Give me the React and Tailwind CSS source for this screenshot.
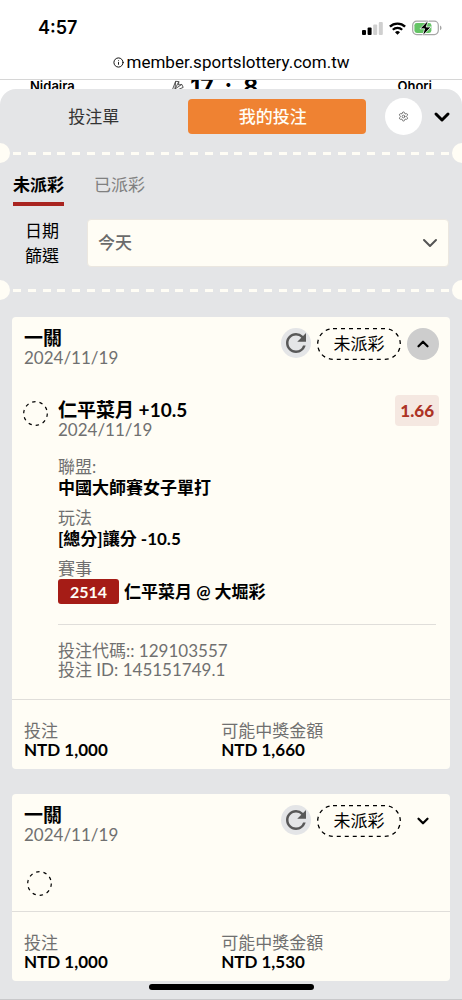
import { useState } from 'react';
import { ChevronDown, ChevronUp, Info, Settings } from 'lucide-react';
import { MdRefresh } from 'react-icons/md';

const BETS = [
    {
        id: 'bet-1',
        title: '一關',
        date: '2024/11/19',
        status: '未派彩',
        open: true,
        stake: 'NTD 1,000',
        payout: 'NTD 1,660',
        pick: {
            name: '仁平菜月 +10.5',
            date: '2024/11/19',
            odds: '1.66',
            league: '中國大師賽女子單打',
            market: '[總分]讓分 -10.5',
            eventNo: '2514',
            event: '仁平菜月 @ 大堀彩',
            code: '129103557',
            betId: '145151749.1'
        }
    },
    {
        id: 'bet-2',
        title: '一關',
        date: '2024/11/19',
        status: '未派彩',
        open: false,
        stake: 'NTD 1,000',
        payout: 'NTD 1,530'
    }
];

const StatusBar = () => (
    <div className="flex items-center justify-between pl-[38px] pr-[20px] pt-4 font-['Inter',sans-serif]">
        <span className="text-[18px] leading-6 font-semibold">4:57</span>
        <div className="flex items-center gap-[6px]">
            <svg width="21" height="14" viewBox="0 0 21 14" aria-hidden="true">
                <rect x="0" y="9" width="4" height="5" rx="1" fill="#000" />
                <rect x="5.6" y="6.5" width="4" height="7.5" rx="1" fill="#000" />
                <rect x="11.2" y="3.5" width="4" height="10.5" rx="1" fill="#cfcfcf" />
                <rect x="16.8" y="1" width="4" height="13" rx="1" fill="#cfcfcf" />
            </svg>
            <svg width="17" height="13" viewBox="0 0 17 13" fill="none" stroke="#000" aria-hidden="true">
                <path d="M.9 4.7a10.9 10.9 0 0 1 15.2 0" strokeWidth="2.4" />
                <path d="M3.8 7.8a6.7 6.7 0 0 1 9.4 0" strokeWidth="2.2" />
                <path d="M8.5 12.8 6 10.2a3.6 3.6 0 0 1 5 0z" fill="#000" stroke="none" />
            </svg>
            <svg width="30" height="16" viewBox="0 0 30 16" aria-hidden="true">
                <rect x=".7" y="1.2" width="25.6" height="13.4" rx="4" fill="#fff" stroke="#a6a6a6" strokeWidth="1.2" />
                <path d="M28 5.6q1.6.8 1.6 2.3T28 10.2z" fill="#a6a6a6" />
                <rect x="2.4" y="2.9" width="17" height="10" rx="2.4" fill="#65c466" />
                <path d="M16.5 0 8 8.8h4.6L10.4 16 19 7h-4.8z" fill="#000" stroke="#fff" strokeWidth=".8" />
            </svg>
        </div>
    </div>
);

// Ticket style separator: half circles on the sides, dashes between
const Perforation = () => (
    <div className="flex h-5 items-center justify-between">
        <span className="h-5 w-[10px] rounded-r-full bg-[#fffdf5]" />
        <div className="mx-[3px] flex flex-1 justify-between">
            {Array.from({ length: 30 }, (_, i) => (
                <span key={i} className="h-[3px] w-2 bg-[#fffdf5]" />
            ))}
        </div>
        <span className="h-5 w-[10px] rounded-l-full bg-[#fffdf5]" />
    </div>
);

const PendingCircle = () => (
    <svg className="shrink-0" width="25" height="25" viewBox="0 0 25 25" fill="none" aria-hidden="true">
        <circle cx="12.5" cy="12.5" r="11.8" stroke="#000" strokeWidth="1.2" strokeDasharray="3.4 4.01" />
    </svg>
);

const StatusPill = ({ children }) => (
    <span className="relative flex h-8 w-[84px] items-center justify-center text-[17px]">
        <svg className="absolute inset-0" width="84" height="32" viewBox="0 0 84 32" fill="none" aria-hidden="true">
            <rect x=".7" y=".7" width="82.6" height="30.6" rx="15.3" stroke="#000" strokeWidth="1.3" strokeDasharray="4 4" />
        </svg>
        {children}
    </span>
);

const Detail = ({ label, children }) => (
    <div className="mt-[9px] leading-[21px]">
        <dt className="text-[#707070]">{label}</dt>
        <dd className="font-bold">{children}</dd>
    </div>
);

const PickDetails = ({ pick }) => (
    <div className="mt-[27px] flex pr-[11px] pl-[11px]">
        <div className="pt-[6px] pr-[10px]">
            <PendingCircle />
        </div>
        <div className="flex-1">
            <div className="flex items-start justify-between">
                <div className="pt-[5px] leading-5">
                    <h3 className="text-[19px] leading-5 font-bold">{pick.name}</h3>
                    <p className="text-[#707070]">{pick.date}</p>
                </div>
                <span className="rounded bg-[#f5e8e1] px-[5px] leading-[31px] font-black text-[#ad3426]">{pick.odds}</span>
            </div>
            <dl className="pt-[7px]">
                <Detail label="聯盟:">{pick.league}</Detail>
                <Detail label="玩法">{pick.market}</Detail>
                <Detail label="賽事">
                    <span className="flex items-center gap-[5px] leading-[25px]">
                        <span className="w-[61px] rounded-[3px] bg-[#a51c16] text-center text-[16px] text-[#fffdf5]">{pick.eventNo}</span>
                        {pick.event}
                    </span>
                </Detail>
            </dl>
            <div className="mt-5 mr-[3px] border-t border-[#e0deda] pt-4 pb-5 leading-[19px] text-[#707070]">
                <p>投注代碼:: {pick.code}</p>
                <p>投注 ID: {pick.betId}</p>
            </div>
        </div>
    </div>
);

const BetCard = ({ bet }) => {
    const [open, setOpen] = useState(bet.open);

    return (
        <article className="rounded bg-[#fffdf5] pt-[11px]">
            <header className="flex items-start justify-between pr-[11px] pl-3">
                <div className="leading-5">
                    <h2 className="text-[19px] leading-5 font-bold">{bet.title}</h2>
                    <p className="text-[#707070]">{bet.date}</p>
                </div>
                <div className="flex items-start gap-[6px]">
                    <button
                        type="button"
                        aria-label="重新整理"
                        className="flex size-[30px] items-center justify-center rounded-full bg-[#e4e5e7] text-[#585858]"
                    >
                        <MdRefresh className="size-[30px]" />
                    </button>
                    <StatusPill>{bet.status}</StatusPill>
                    <button
                        type="button"
                        aria-label={open ? '收合' : '展開'}
                        aria-expanded={open}
                        onClick={() => setOpen(!open)}
                        className={`flex size-8 items-center justify-center rounded-full ${open ? 'bg-[#cdcdcd]' : ''}`}
                    >
                        {open ? <ChevronUp size={18} strokeWidth={3} /> : <ChevronDown size={18} strokeWidth={3} />}
                    </button>
                </div>
            </header>

            {open && bet.pick ? (
                <PickDetails pick={bet.pick} />
            ) : (
                <div className="px-[15px] pt-[26px] pb-[15px]">
                    <PendingCircle />
                </div>
            )}

            <dl className="grid grid-cols-[10fr_11fr] border-t border-[#e0deda] px-3 pt-[21px] pb-[10px] leading-[19px]">
                <div>
                    <dt className="text-[#707070]">投注</dt>
                    <dd className="font-bold">{bet.stake}</dd>
                </div>
                <div>
                    <dt className="text-[#707070]">可能中獎金額</dt>
                    <dd className="font-bold">{bet.payout}</dd>
                </div>
            </dl>
        </article>
    );
};

const App = () => {
    const [range, setRange] = useState('today');

    return (
        <div className="bg-white font-['Lato','Noto_Sans_CJK_TC',sans-serif] text-[17px] text-black">
            <StatusBar />
            <div className="mt-[10px] flex h-[30px] items-start justify-center gap-[3px] border-b border-[#d6d6d6] font-['Roboto',sans-serif] text-[17px] leading-6">
                <Info size={11} className="mt-[7px]" />
                member.sportslottery.com.tw
            </div>

            {/* Match score, mostly covered by the bet slip */}
            <div className="grid h-[9px] grid-cols-[5fr_8fr_auto] items-start overflow-hidden px-[30px] font-['Inter',sans-serif] text-[13px] leading-[13px] font-semibold">
                <span>Nidaira</span>
                <div className="flex items-start gap-[6px] text-[23px] leading-[14px] font-bold">
                    <svg width="13" height="12" viewBox="0 0 13 12" fill="none" stroke="#444" strokeWidth=".9" aria-hidden="true">
                        <path d="M1.5 9.5 4.6 1.3 7.8 1.6 7.6 5 10.8 4.4 12.2 7.4 4 11zM4.6 1.3 4 9M7.8 1.6 4 9M10.8 4.4 4 9" />
                    </svg>
                    <span>17</span>
                    <span className="px-[5px]">:</span>
                    <span>8</span>
                </div>
                <span>Ohori</span>
            </div>

            <main className="rounded-t-2xl border-b border-[#c8c8ca] bg-[#e4e5e7] pt-[9px]">
                <div className="flex items-center">
                    <div className="grid flex-1 grid-cols-[20fr_19fr]">
                        <button type="button" className="h-[35px] text-[#333]">投注單</button>
                        <button type="button" className="h-[35px] rounded bg-[#ef8232] pr-2 font-medium text-[#fffdf5]">我的投注</button>
                    </div>
                    <button
                        type="button"
                        aria-label="設定"
                        className="ml-[19px] flex size-[37px] items-center justify-center rounded-full bg-white text-[#444]"
                    >
                        <Settings size={11} strokeWidth={1.5} />
                    </button>
                    <button type="button" aria-label="關閉" className="flex h-[37px] w-10 items-center justify-center">
                        <ChevronDown size={24} strokeWidth={3} />
                    </button>
                </div>

                <div className="mt-2">
                    <Perforation />
                </div>

                <nav className="mt-[10px] flex gap-[30px] pl-[13px] leading-6">
                    <button type="button" className="border-b-4 border-[#a92420] pb-[5px] font-bold">未派彩</button>
                    <button type="button" className="border-b-4 border-transparent pb-[5px] text-[#808080]">已派彩</button>
                </nav>

                <div className="mt-3 flex items-center pr-[13px] pl-3">
                    <label htmlFor="date-range" className="mr-[15px] w-[60px] text-center leading-[25px]">
                        日期
                        <br />
                        篩選
                    </label>
                    <div className="relative flex-1">
                        <select
                            id="date-range"
                            value={range}
                            onChange={(e) => setRange(e.target.value)}
                            className="h-12 w-full appearance-none rounded border border-[#ebe7e0] bg-[#fffdf5] px-[10px] font-medium text-[#6b6b6b]"
                        >
                            <option value="today">今天</option>
                            <option value="yesterday">昨天</option>
                        </select>
                        <ChevronDown size={24} strokeWidth={2} className="pointer-events-none absolute top-3 right-[7px] text-[#555]" />
                    </div>
                </div>

                <div className="mt-3">
                    <Perforation />
                </div>

                <section className="mx-3 mt-[17px] flex flex-col gap-[25px]">
                    {BETS.map((bet) => (
                        <BetCard key={bet.id} bet={bet} />
                    ))}
                </section>

                <div className="mx-auto mt-[3px] mb-[9px] h-[6px] w-[165px] rounded-full bg-black" />
            </main>
        </div>
    );
};

export default App;
